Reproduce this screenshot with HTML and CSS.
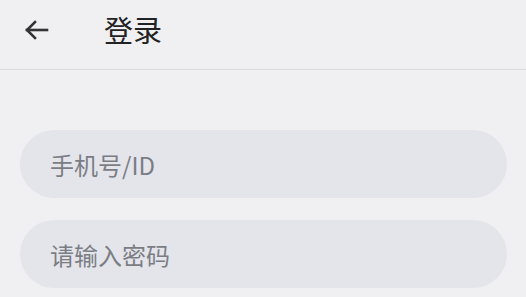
FILE: index.html
```html
<!DOCTYPE html>
<html lang="zh-CN">
<head>
<meta charset="utf-8">
<title>登录</title>
<link rel="stylesheet" href="styles.css">
</head>
<body>
<header class="topbar">
  <button class="back" aria-label="返回">
    <svg width="26" height="22" viewBox="0 0 26 22" fill="none" stroke="#333335" stroke-width="2.6" stroke-linecap="square">
      <path d="M3 11H23"/>
      <path d="M11 3L3 11L11 19"/>
    </svg>
  </button>
  <h1 class="title">登录</h1>
</header>
<main class="form">
  <input class="field" type="text" placeholder="手机号/ID">
  <input class="field" type="password" placeholder="请输入密码">
</main>
</body>
</html>
```
FILE: styles.css
```css
html, body {
  margin: 0;
  padding: 0;
  background: #f0f0f2;
  font-family: "Noto Sans CJK SC", "Noto Sans", sans-serif;
  overflow: hidden;
}
.topbar {
  height: 70px;
  border-bottom: 1px solid #dcdcdf;
  display: flex;
  align-items: center;
  padding: 0 0 10px 24px;
  box-sizing: border-box;
}
.back {
  background: none;
  border: 0;
  padding: 0;
  width: 26px;
  height: 22px;
  display: flex;
}
.title {
  margin: 0 0 0 54px;
  font-size: 29px;
  font-weight: 400;
  color: #222224;
  line-height: 1;
}
.form {
  padding: 60px 19px 0 20px;
  display: flex;
  flex-direction: column;
  gap: 22px;
}
.field {
  height: 68px;
  border: 0;
  border-radius: 34px;
  background: #e4e5ea;
  padding: 0 0 0 30px;
  font-family: "Noto Sans CJK SC", "Noto Sans", sans-serif;
  font-size: 24px;
  color: #333;
  outline: none;
  box-sizing: border-box;
  width: 100%;
}
.field::placeholder {
  color: #7b7d85;
}
```
